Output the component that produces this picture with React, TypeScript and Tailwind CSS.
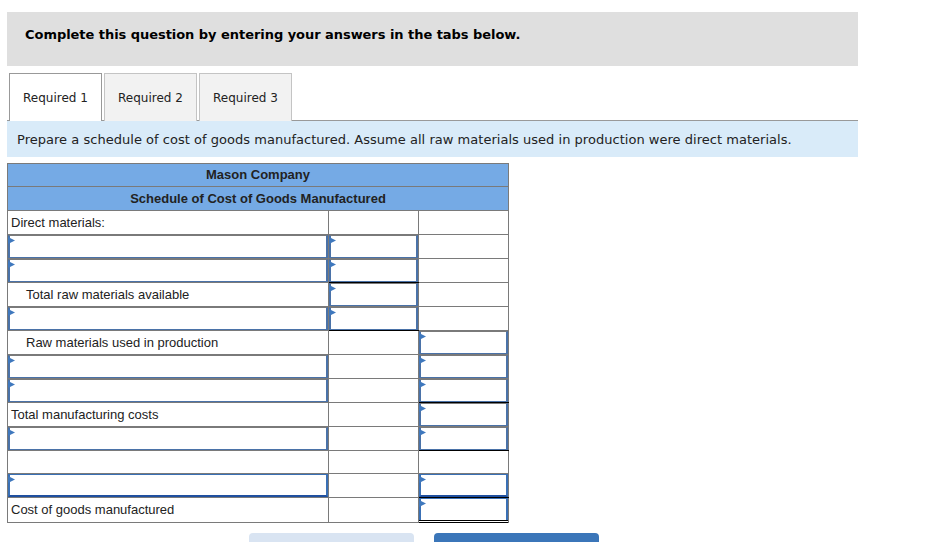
import React from "react";

type Cell = { text?: string; indent?: boolean; input?: boolean; focus?: boolean; bottomBlack?: boolean; double?: boolean };
type Row = { h: number; cells: [Cell, Cell, Cell] };

const E: Cell = {};
const I: Cell = { input: true };

const rows: Row[] = [
  { h: 24, cells: [{ text: "Direct materials:" }, E, E] },
  { h: 24, cells: [I, I, E] },
  { h: 24, cells: [I, { input: true, bottomBlack: true }, E] },
  { h: 24, cells: [{ text: "Total raw materials available", indent: true }, I, E] },
  { h: 24, cells: [I, { input: true, bottomBlack: true }, E] },
  { h: 24, cells: [{ text: "Raw materials used in production", indent: true }, E, I] },
  { h: 24, cells: [I, E, I] },
  { h: 24, cells: [I, E, { input: true, bottomBlack: true }] },
  { h: 24, cells: [{ text: "Total manufacturing costs" }, E, I] },
  { h: 24, cells: [I, E, { input: true, bottomBlack: true }] },
  { h: 23, cells: [E, E, E] },
  { h: 24, cells: [{ input: true, focus: true }, E, { input: true, focus: true, bottomBlack: true }] },
  { h: 25, cells: [{ text: "Cost of goods manufactured" }, E, { input: true, focus: true, double: true }] },
];

const TableCell = ({ cell }: { cell: Cell }) => {
  return (
    <td className={`relative border border-[#7a7a7a] p-0 align-middle ${cell.bottomBlack ? "border-b-black" : ""}`}>
      {cell.input && (
        <div className="absolute inset-0">
          <input
            aria-label="answer"
            className={`block h-full w-full border-x-2 border-t bg-white outline-none ${
              cell.focus
                ? "border-b-2 border-x-[#3a70b5] border-t-[#3a70b5] border-b-[#1f4f9f]"
                : "border-b border-x-[#4a72a8] border-t-[#7a7a7a] border-b-[#4a72a8]"
            }`}
          />
          <svg className="absolute left-0 top-[2px]" width="7" height="7" viewBox="0 0 7 7">
            <path d="M0 0 L7 3.5 L0 7 Z" fill="#3f78bd" />
          </svg>
        </div>
      )}
      {cell.double && <div className="absolute -bottom-px left-0 right-0 h-[3px] border-y border-black bg-white" />}
      {cell.text && (
        <span className={`block whitespace-nowrap pb-px text-[13px] leading-none text-[#222] ${cell.indent ? "pl-[18px]" : "pl-[3px]"}`}>
          {cell.text}
        </span>
      )}
    </td>
  );
};

const App = () => {
  const tabs = ["Required 1", "Required 2", "Required 3"];

  return (
    <div className="h-[542px] w-[943px] overflow-hidden bg-white pt-3 pl-[7px]" style={{ fontFamily: '"DejaVu Sans", Verdana, sans-serif' }}>
      <div className="flex h-[54px] w-[851px] bg-[#dfdfdf] pl-[18px] pt-[15px] text-[13px] leading-4 font-bold tracking-[-0.045px] text-black">
        Complete this question by entering your answers in the tabs below.
      </div>

      {/* Tabs */}
      <div className="mt-[7px] flex h-[48px] w-[851px] gap-0.5 border-b border-[#999] pl-0.5">
        {tabs.map((tab, i) => (
          <div
            key={tab}
            className={`flex h-[48px] w-[93px] items-center justify-center border border-b-0 text-[12px] text-[#222] ${
              i === 0 ? "border-[#999] bg-white" : "border-[#c4c4c4] bg-[#f2f2f2]"
            }`}
          >
            {tab}
          </div>
        ))}
      </div>

      <div className="flex h-[36px] w-[851px] items-center bg-[#d9ebf9] pl-2.5 pt-0.5 text-[13px] tracking-[0.026px] text-[#222]">
        Prepare a schedule of cost of goods manufactured. Assume all raw materials used in production were direct materials.
      </div>

      {/* Schedule */}
      <table className="mt-1.5 w-[501px] table-fixed border-collapse" style={{ fontFamily: '"Liberation Sans", Arial, sans-serif' }}>
        <colgroup>
          <col className="w-[321px]" />
          <col className="w-[90px]" />
          <col className="w-[90px]" />
        </colgroup>
        <thead>
          <tr className="h-[23px]">
            <th colSpan={3} className="border border-[#7a7a7a] bg-[#75aae5] p-0 text-[13px] font-bold text-[#222]">
              Mason Company
            </th>
          </tr>
          <tr className="h-[24px]">
            <th colSpan={3} className="border border-[#7a7a7a] bg-[#75aae5] p-0 text-[13px] font-bold text-[#222]">
              Schedule of Cost of Goods Manufactured
            </th>
          </tr>
        </thead>
        <tbody>
          {rows.map((row, i) => (
            <tr key={i} style={{ height: row.h }}>
              {row.cells.map((cell, j) => (
                <TableCell key={j} cell={cell} />
              ))}
            </tr>
          ))}
        </tbody>
      </table>

      {/* Bottom buttons */}
      <div className="mt-2.5 ml-[242px] flex gap-5">
        <div className="h-[20px] w-[165px] rounded-t-sm bg-[#d9e4f2]" />
        <div className="h-[20px] w-[165px] rounded-t-sm bg-[#3b76b9]" />
      </div>
    </div>
  );
};

export default App;
